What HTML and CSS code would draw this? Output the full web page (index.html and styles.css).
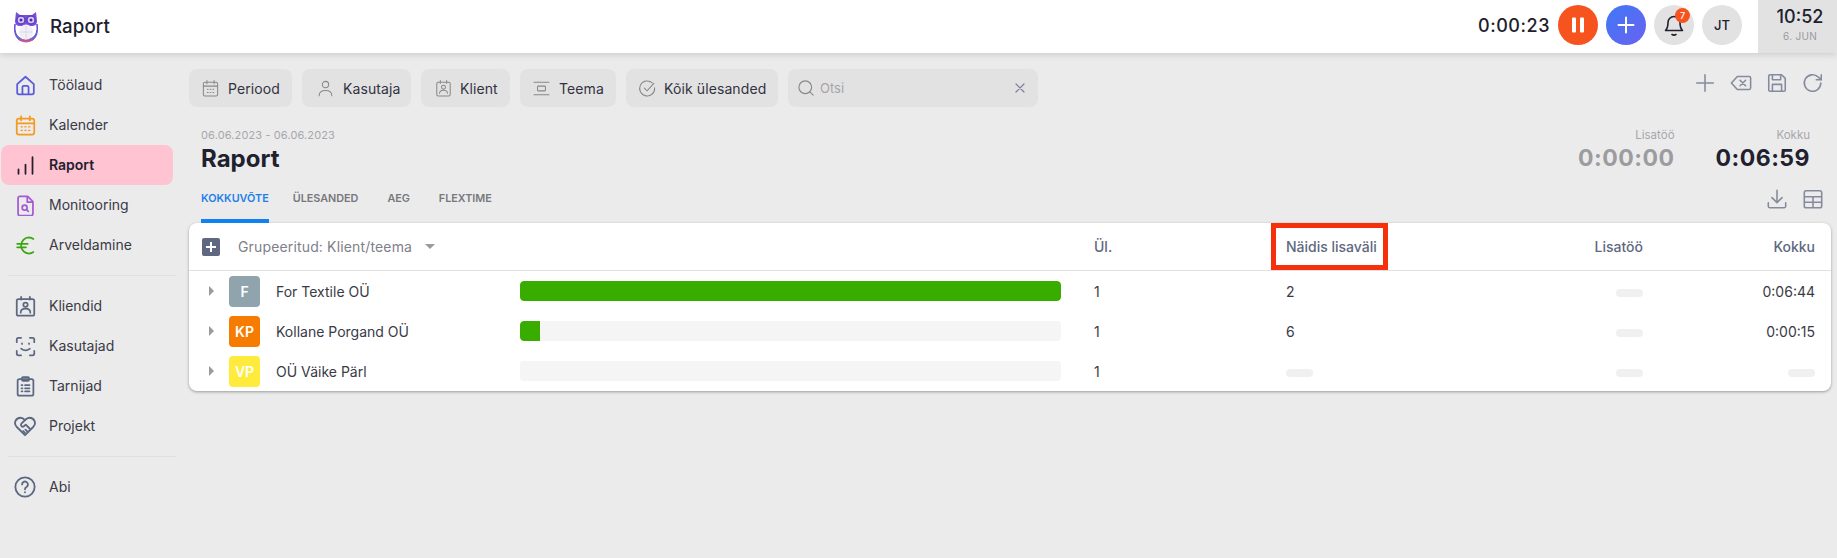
FILE: index.html
```html
<!DOCTYPE html>
<html lang="et">
<head>
<meta charset="utf-8">
<title>Raport</title>
<link rel="stylesheet" href="styles.css">
</head>
<body>
<header class="topbar">
  <div class="brand">
    <svg class="owl" viewBox="0 0 26 32" width="26" height="32" fill="none">
      <defs><linearGradient id="owlg" x1="0" y1="0" x2="0" y2="1"><stop offset="0" stop-color="#6a3fd8"/><stop offset="0.7" stop-color="#5a62d8"/><stop offset="1" stop-color="#d0567f"/></linearGradient></defs>
      <path d="M3 1 L7 4 H19 L23 1 L24 10 Q24 15 19 15 H7 Q2 15 2 10Z" fill="#7a4fd8"/>
      <circle cx="8" cy="9" r="4" fill="#d9c8f5" stroke="#5a3cc4" stroke-width="1.4"/>
      <circle cx="18" cy="9" r="4" fill="#d9c8f5" stroke="#5a3cc4" stroke-width="1.4"/>
      <circle cx="8" cy="9" r="1.5" fill="#4b2fa8"/><circle cx="18" cy="9" r="1.5" fill="#4b2fa8"/>
      <path d="M2 13 Q0 24 6 29 Q10 31 13 31 Q16 31 20 29 Q26 24 24 13 Q25 24 19 27 Q15 29 13 29 Q9 29 7 27 Q1 24 2 13Z" fill="url(#owlg)" stroke="url(#owlg)"/>
      <ellipse cx="13" cy="21" rx="7" ry="7.5" fill="#f0eef6"/>
      <path d="M13 15v13M7 21h12" stroke="#d6d3e4" stroke-width="0.8"/>
    </svg>
    <span class="brand-title">Raport</span>
  </div>
  <div class="top-actions">
    <span class="timer">0:00:23</span>
    <button class="round round-pause" type="button">
      <svg viewBox="0 0 24 24" width="24" height="24" fill="#fff"><rect x="6" y="4.500" width="4" height="15" rx="1"/><rect x="14" y="4.500" width="4" height="15" rx="1"/></svg>
    </button>
    <button class="round round-add" type="button">
      <svg viewBox="0 0 24 24" width="24" height="24" fill="none" stroke="#fff" stroke-width="2" stroke-linecap="round"><path d="M12 4.500v15M4.500 12h15"/></svg>
    </button>
    <button class="round round-grey round-bell" type="button">
      <svg viewBox="0 0 24 24" width="24" height="24" fill="none" stroke="#20202e" stroke-width="1.600" stroke-linecap="round" stroke-linejoin="round"><path d="M12 3.500a6 6 0 0 0-6 6c0 5-2 7.500-2.500 8h17c-.5-.5-2.500-3-2.500-8a6 6 0 0 0-6-6z"/><path d="M10 21.500q2 1.200 4 0"/></svg>
      <span class="badge">7</span>
    </button>
    <button class="round round-grey round-user" type="button">JT</button>
    <div class="clock">
      <span class="clock-time">10:52</span>
      <span class="clock-date">6. JUN</span>
    </div>
  </div>
</header>

<div class="shell">
  <nav class="sidebar">
    <a class="nav-item">
      <svg class="nav-icon" viewBox="0 0 24 24" fill="none" stroke="#5b5bd6" stroke-linejoin="round"><path d="M2.500 10.500 12 2l9.500 8.500V20a2 2 0 0 1-2 2h-15a2 2 0 0 1-2-2z"/><path d="M8.500 22v-8a1.500 1.500 0 0 1 1.500-1.500h4a1.500 1.500 0 0 1 1.500 1.500v8"/></svg>
      <span>Töölaud</span>
    </a>
    <a class="nav-item">
      <svg class="nav-icon" viewBox="0 0 24 24" fill="none" stroke="#f59a1f" stroke-linecap="round"><rect x="2" y="4" width="20" height="18.500" rx="2.500"/><path d="M2 9.500h20M7 1.500v4.500M17 1.500v4.500"/><path d="M7 13.500h1.500M11.200 13.500h1.500M15.500 13.500H17M7 17.500h1.500M11.200 17.500h1.500M15.500 17.500H17" stroke-width="1.500"/></svg>
      <span>Kalender</span>
    </a>
    <a class="nav-item is-active">
      <svg class="nav-icon" viewBox="0 0 24 24" fill="none" stroke="#20202e" stroke-width="2.400" stroke-linecap="round"><path d="M4 21.500v-5M12 21.500V11M20 21.500V2.500"/></svg>
      <span>Raport</span>
    </a>
    <a class="nav-item">
      <svg class="nav-icon" viewBox="0 0 24 24" fill="none" stroke="#a45bd6" stroke-linejoin="round"><path d="M3.500 3.500a2 2 0 0 1 2-2h9l6 6v14a2 2 0 0 1-2 2h-13a2 2 0 0 1-2-2z"/><path d="M14 1.500v6.500h6.500"/><circle cx="11" cy="14.500" r="2.800"/><path d="m13.200 16.700 2 2" stroke-linecap="round"/></svg>
      <span>Monitooring</span>
    </a>
    <a class="nav-item">
      <svg class="nav-icon" viewBox="0 0 24 24" fill="none" stroke="#3aa60f" stroke-width="2.200" stroke-linecap="round"><path d="M21 4.500A9.500 9.500 0 0 0 16 2.800 9 9 0 0 0 7 12a9 9 0 0 0 9 9.200 9.500 9.500 0 0 0 5-1.700"/><path d="M2.500 10h12M2.500 14h10"/></svg>
      <span>Arveldamine</span>
    </a>
    <div class="nav-divider"></div>
    <a class="nav-item">
      <svg class="nav-icon" viewBox="0 0 24 24" fill="none" stroke="#5c6780" stroke-linecap="round"><rect x="2" y="3.500" width="20" height="19" rx="2"/><path d="M7 1v3M17 1v3"/><circle cx="12" cy="10" r="2.500"/><path d="M6.500 19c0-3 2.500-4.500 5.500-4.500s5.500 1.500 5.500 4.500"/></svg>
      <span>Kliendid</span>
    </a>
    <a class="nav-item">
      <svg class="nav-icon" viewBox="0 0 24 24" fill="none" stroke="#5c6780" stroke-linecap="round"><path d="M2 7V4a2 2 0 0 1 2-2h3M17 2h3a2 2 0 0 1 2 2v3M22 17v3a2 2 0 0 1-2 2h-3M7 22H4a2 2 0 0 1-2-2v-3"/><path d="M7 14.500q5 4 10 0M8 8.500v.5M16 8.500v.5"/></svg>
      <span>Kasutajad</span>
    </a>
    <a class="nav-item">
      <svg class="nav-icon" viewBox="0 0 24 24" fill="none" stroke="#5c6780" stroke-linecap="round" stroke-linejoin="round"><rect x="3" y="3.500" width="18" height="19" rx="2"/><rect x="8" y="1.200" width="8" height="4.300" rx="1.200"/><path d="M7.500 10.500h1M11.500 10.500h5M7.500 14h1M11.500 14h5M7.500 17.500h1M11.500 17.500h5"/></svg>
      <span>Tarnijad</span>
    </a>
    <a class="nav-item">
      <svg class="nav-icon nav-icon-wide" viewBox="0 0 24 24" fill="none" stroke="#5c6780" stroke-linecap="round" stroke-linejoin="round"><path d="M12 22 2.800 12.800A5.800 5.800 0 0 1 7 3c2 0 3.500.8 5 2.500C13.500 3.800 15 3 17 3a5.800 5.800 0 0 1 4.200 9.800z"/><path d="M12 5.500 8 9.500a2 2 0 0 0 2.800 2.800l2-1.800 4.500 4.500M15 18.500l-2.500-2.500M12 19.500l-2-2"/></svg>
      <span>Projekt</span>
    </a>
    <div class="nav-divider nav-divider-low"></div>
    <a class="nav-item">
      <svg class="nav-icon nav-icon-wide" viewBox="0 0 24 24" fill="none" stroke="#5c6780" stroke-linecap="round"><circle cx="12" cy="12" r="10.500"/><path d="M8.800 9.200a3.200 3.200 0 1 1 4.800 2.800c-1 .6-1.600 1.200-1.600 2.500"/><path d="M12 17.500v.3"/></svg>
      <span>Abi</span>
    </a>
  </nav>

  <main class="main">
    <div class="filters">
      <button class="chip chip-period" type="button">
        <svg class="chip-icon" viewBox="0 0 24 24" fill="none" stroke="#888" stroke-width="1.300" stroke-linecap="round"><rect x="3" y="4" width="18" height="17.500" rx="2"/><path d="M3 9h18M7.500 2v4M16.500 2v4M8 13h1M11.500 13h1M15 13h1M8 17h1M11.500 17h1M15 17h1"/></svg>
        Periood
      </button>
      <button class="chip chip-user" type="button">
        <svg class="chip-icon" viewBox="0 0 24 24" fill="none" stroke="#888" stroke-width="1.300" stroke-linecap="round"><circle cx="12" cy="7" r="4"/><path d="M4 21c0-4.500 3.500-6.500 8-6.500s8 2 8 6.500"/></svg>
        Kasutaja
      </button>
      <button class="chip chip-client" type="button">
        <svg class="chip-icon" viewBox="0 0 24 24" fill="none" stroke="#888" stroke-width="1.300" stroke-linecap="round"><rect x="3.500" y="4" width="17" height="17.500" rx="2"/><path d="M8 2v3.500M16 2v3.500"/><circle cx="12" cy="10.500" r="2.500"/><path d="M7 18c0-2.500 2.200-3.800 5-3.800s5 1.300 5 3.800"/></svg>
        Klient
      </button>
      <button class="chip chip-theme" type="button">
        <svg class="chip-icon" viewBox="0 0 24 24" fill="none" stroke="#888" stroke-width="1.300" stroke-linecap="round"><path d="M2.500 4h19M2.500 20h19"/><rect x="7" y="9" width="10" height="6" rx="1"/></svg>
        Teema
      </button>
      <button class="chip chip-tasks" type="button">
        <svg class="chip-icon" viewBox="0 0 24 24" fill="none" stroke="#888" stroke-width="1.300" stroke-linecap="round"><path d="M21 11a9.500 9.500 0 1 1-3-6"/><path d="m8 11.500 3.500 3.500L20 5.500"/></svg>
        Kõik ülesanded
      </button>
      <div class="search">
        <svg class="search-icon" viewBox="0 0 24 24" fill="none" stroke="#888" stroke-width="1.500" stroke-linecap="round"><circle cx="11" cy="11" r="8.500"/><path d="m17.500 17.500 4 4"/></svg>
        <span class="search-text">Otsi</span>
        <svg class="search-x" viewBox="0 0 12 12" fill="none" stroke="#7d7f9c" stroke-width="1.200" stroke-linecap="round"><path d="m2 2 8 8M10 2l-8 8"/></svg>
      </div>
      <div class="tools">
        <svg viewBox="0 0 24 24" fill="none" stroke-linecap="round"><path d="M12 3v18M3 12h18"/></svg>
        <svg viewBox="0 0 24 24" fill="none" stroke-linecap="round" stroke-linejoin="round"><path d="M8 5h13a1.500 1.500 0 0 1 1.500 1.500v11A1.500 1.500 0 0 1 21 19H8l-6.500-7z"/><path d="m11 9 6 6M17 9l-6 6"/></svg>
        <svg viewBox="0 0 24 24" fill="none" stroke-linecap="round" stroke-linejoin="round"><path d="M3 4.500A1.500 1.500 0 0 1 4.500 3H17l4 4v12.500a1.500 1.500 0 0 1-1.500 1.500h-15A1.500 1.500 0 0 1 3 19.500z"/><path d="M7 3v5.500h9V3M7 21v-7.500h10V21"/></svg>
        <svg viewBox="0 0 24 24" fill="none" stroke-linecap="round" stroke-linejoin="round"><path d="M20.500 12a9 9 0 1 1-2.700-6.400L21 8.500"/><path d="M21 3v5.500h-5.500"/></svg>
      </div>
    </div>

    <section class="head">
      <div class="head-left">
        <div class="date-range">06.06.2023 - 06.06.2023</div>
        <h1 class="title">Raport</h1>
      </div>
      <div class="totals">
        <div class="total total-extra">
          <div class="total-label">Lisatöö</div>
          <div class="total-value">0:00:00</div>
        </div>
        <div class="total total-sum">
          <div class="total-label">Kokku</div>
          <div class="total-value">0:06:59</div>
        </div>
      </div>
    </section>

    <div class="tabbar">
      <div class="tabs">
        <a class="tab is-current">KOKKUVÕTE</a>
        <a class="tab">ÜLESANDED</a>
        <a class="tab">AEG</a>
        <a class="tab">FLEXTIME</a>
      </div>
      <div class="tab-tools">
        <svg viewBox="0 0 24 24" fill="none" stroke-linecap="round" stroke-linejoin="round"><path d="M12 2.500v13M6.500 10.500l5.500 5.500 5.500-5.500M2.500 16v4A1.500 1.500 0 0 0 4 21.500h16a1.500 1.500 0 0 0 1.500-1.500v-4"/></svg>
        <svg viewBox="0 0 24 24" fill="none"><rect x="2.500" y="3" width="19" height="18.500" rx="2"/><path d="M2.500 9.500h19M2.500 15.500h19M12 9.500v12"/></svg>
      </div>
    </div>

    <section class="card">
      <div class="row row-head">
        <div class="group-by">
          <span class="group-plus"><svg viewBox="0 0 18 18" width="18" height="18" fill="none" stroke="#fff" stroke-width="2"><path d="M9 4v10M4 9h10"/></svg></span>
          <span class="group-text">Grupeeritud: Klient/teema</span>
          <span class="group-caret"></span>
        </div>
        <div class="col-count">Ül.</div>
        <div class="col-sample">Näidis lisaväli<span class="highlight"></span></div>
        <div class="col-end col-extra">Lisatöö</div>
        <div class="col-end">Kokku</div>
      </div>

      <div class="row">
        <span class="arrow"></span>
        <span class="avatar avatar-grey">F</span>
        <span class="name">For Textile OÜ</span>
        <div class="bar"><div class="bar-fill" style="width:100%"></div></div>
        <div class="col-count">1</div>
        <div class="col-sample">2</div>
        <div class="col-end"><span class="skeleton"></span></div>
        <div class="col-end">0:06:44</div>
      </div>
      <div class="row">
        <span class="arrow"></span>
        <span class="avatar avatar-orange">KP</span>
        <span class="name">Kollane Porgand OÜ</span>
        <div class="bar"><div class="bar-fill bar-fill-short" style="width:3.700%"></div></div>
        <div class="col-count">1</div>
        <div class="col-sample">6</div>
        <div class="col-end"><span class="skeleton"></span></div>
        <div class="col-end">0:00:15</div>
      </div>
      <div class="row">
        <span class="arrow"></span>
        <span class="avatar avatar-yellow">VP</span>
        <span class="name">OÜ Väike Pärl</span>
        <div class="bar"></div>
        <div class="col-count">1</div>
        <div class="col-sample"><span class="skeleton"></span></div>
        <div class="col-end"><span class="skeleton"></span></div>
        <div class="col-end"><span class="skeleton"></span></div>
      </div>
    </section>
  </main>
</div>
</body>
</html>
```
FILE: styles.css
```css
* { box-sizing: border-box; }
html, body { margin: 0; height: 100%; }
body {
  background: #ebebec;
  color: #2a2a36;
  font-family: Inter, "Liberation Sans", sans-serif;
  font-size: 14px;
  overflow: hidden;
}
button { font: inherit; color: inherit; border: 0; padding: 0; }

.topbar {
  height: 53px;
  background: #fff;
  display: flex;
  justify-content: space-between;
  align-items: stretch;
  box-shadow: 0 2px 6px rgba(0, 0, 0, .12);
  position: relative;
  z-index: 2;
}
.brand { display: flex; align-items: center; padding-left: 13px; gap: 11px; }
.owl { display: block; }
.brand-title { font-size: 18.700px; font-weight: 500; color: #20202e; letter-spacing: .1px; }

.top-actions { display: flex; align-items: center; }
.timer { font-size: 18px; font-weight: 500; color: #20202e; letter-spacing: .55px; margin-right: 8px; margin-top: -2px; }
.round {
  width: 40px; height: 40px; border-radius: 50%;
  display: flex; align-items: center; justify-content: center;
  margin-right: 8px; position: relative; margin-top: -3px;
}
.round-pause { background: #f7531f; }
.round-add { background: linear-gradient(135deg, #3f78f5, #6a62f2); }
.round-grey { background: #e2e2e2; }
.round-user { font-size: 13px; font-weight: 500; color: #20202e; margin-right: 16px; }
.badge {
  position: absolute; top: 3px; right: 4px;
  width: 15px; height: 15px; border-radius: 50%;
  background: #f7531f; color: #fff;
  font-size: 9px; font-weight: 500; line-height: 15px; text-align: center;
}
.clock {
  width: 79px; height: 53px; background: #e2e2e2;
  display: flex; flex-direction: column; align-items: center; justify-content: flex-start;
  padding: 6px 0 0 5px;
}
.clock-time { font-size: 18px; font-weight: 500; line-height: 22px; color: #20202e; }
.clock-date { font-size: 10px; line-height: 12px; margin-top: 2px; color: #9a9a9f; letter-spacing: .3px; }

.shell { display: flex; align-items: flex-start; }
.sidebar { width: 189px; flex: none; padding: 12px 0 0 1px; }
.nav-item {
  display: flex; align-items: center;
  width: 172px; height: 40px;
  padding-left: 14px; gap: 13px;
  border-radius: 8px;
  color: #3a3a46;
  font-size: 14px;
  line-height: 16px;
}
.nav-item span { margin-top: -1px; }
.nav-icon { width: 21px; height: 21px; flex: none; stroke-width: 2; }
.nav-icon-wide { width: 22px; height: 22px; margin-left: -1px; }
.nav-item.is-active { background: #ffc3d1; font-weight: 600; color: #20202e; }
.nav-divider { height: 1px; background: #e0e0e1; width: 168px; margin: 10px 0 10px 7px; }
.nav-divider-low { margin: 10px 0 10px 7px; }

.main { width: 1642px; flex: none; }
.filters { display: flex; gap: 10px; margin-top: 16px; height: 38px; align-items: stretch; }
.chip {
  display: flex; align-items: center; gap: 8px;
  background: #e2e2e3;
  border-radius: 8px;
  padding-left: 12px;
  font-size: 14px;
  color: #33333f;
  letter-spacing: .1px;
}
.chip-icon { width: 19px; height: 19px; flex: none; }
.chip-period { width: 103px; }
.chip-user { width: 109px; padding-left: 14px; }
.chip-client { width: 89px; padding-left: 13px; gap: 7px; }
.chip-theme { width: 96px; padding-left: 12px; }
.chip-tasks { width: 152px; padding-left: 12px; white-space: nowrap; gap: 7px; }
.search {
  width: 250px; display: flex; align-items: center;
  background: #e2e2e3; border-radius: 8px;
  padding: 0 12px 0 9px;
}
.search-icon { width: 18px; height: 18px; margin-right: 5px; }
.search-text { flex: 1; font-size: 13px; color: #a5a5a9; }
.search-x { width: 12px; height: 12px; }
.tools { margin-left: auto; display: flex; gap: 14px; padding-right: 7px; align-items: center; height: 28px; }
.tools svg { width: 22px; height: 22px; flex: none; stroke: #858b9d; stroke-width: 1.700; }

.head { display: flex; justify-content: space-between; margin-top: 21px; padding-left: 12px; height: 50px; }
.date-range { font-size: 11px; line-height: 14px; color: #a7a7ab; letter-spacing: .12px; }
.title { margin: 2px 0 0; font-size: 24px; line-height: 30px; font-weight: 700; color: #20202e; }
.totals { display: flex; gap: 41px; padding-right: 21px; }
.total { text-align: right; }
.total-label { font-size: 11.500px; line-height: 14px; color: #a7a7ab; }
.total-value { font-size: 23px; line-height: 30px; font-weight: 700; margin-top: 1px; letter-spacing: .5px; }
.total-extra .total-value { color: #9c9c9f; }
.total-sum .total-value { color: #20202e; }

.tabbar { display: flex; justify-content: space-between; align-items: flex-start; height: 45px; }
.tabs { display: flex; gap: 29px; padding-left: 12px; height: 45px; }
.tab {
  display: block; font-size: 10.800px; font-weight: 600; color: #77777c;
  padding-top: 14px; height: 45px; line-height: 14px;
}
.tab.is-current { color: #1e7fe8; border-bottom: 4px solid #1180f0; margin-right: -5px; }
.tab-tools { display: flex; gap: 14px; padding: 10px 7px 0 0; }
.tab-tools svg { width: 22px; height: 22px; flex: none; stroke: #858b9d; stroke-width: 1.700; }

.card {
  background: #fff; border-radius: 8px; height: 168px;
  box-shadow: 0 1px 3px rgba(0, 0, 0, .35);
}
.row {
  display: grid;
  grid-template-columns: 40px 47px 244px 541px 33px 192px 200px 157px 172px;
  padding-right: 16px;
  height: 40px;
  align-items: center;
  color: #3a3a46;
  font-size: 14px;
}
.row > .col-count { grid-column: 6; }
.row-head {
  height: 48px; border-bottom: 1px solid #e1e1e3;
  color: #5e6880; font-weight: 500;
}
.group-by { grid-column: 1 / 6; display: flex; align-items: center; padding-left: 13px; }
.group-plus { width: 18px; height: 18px; background: #5f6880; border-radius: 2px; display: block; }
.group-plus svg { display: block; }
.group-text { margin-left: 18px; color: #80808a; font-weight: 400; font-size: 14px; letter-spacing: .15px; }
.group-caret {
  margin-left: 13px; width: 0; height: 0;
  border-left: 5px solid transparent; border-right: 5px solid transparent;
  border-top: 5px solid #9a9aa0;
}
.col-sample { position: relative; grid-column: 7; }
.col-end { text-align: right; }
.highlight {
  position: absolute; left: -15px; top: -15px;
  width: 117px; height: 47px;
  border: 5px solid #f5300a;
}
.arrow {
  justify-self: start; margin-left: 20px; width: 0; height: 0;
  border-top: 5px solid transparent; border-bottom: 5px solid transparent;
  border-left: 5px solid #9a9aa0;
}
.avatar {
  width: 31px; height: 31px; border-radius: 4px;
  display: flex; align-items: center; justify-content: center;
  color: #fff; font-size: 14px; font-weight: 600;
}
.avatar-grey { background: #90a4ae; }
.avatar-orange { background: #f57c00; }
.avatar-yellow { background: #ffeb3b; }
.bar { height: 20px; background: #f5f5f5; border-radius: 4px; overflow: hidden; }
.bar-fill { height: 100%; background: #38ad00; border-radius: 4px; }
.bar-fill-short { border-radius: 4px 0 0 4px; }
.skeleton { display: inline-block; width: 27px; height: 8px; border-radius: 4px; background: #f0f0f1; vertical-align: middle; }
```
